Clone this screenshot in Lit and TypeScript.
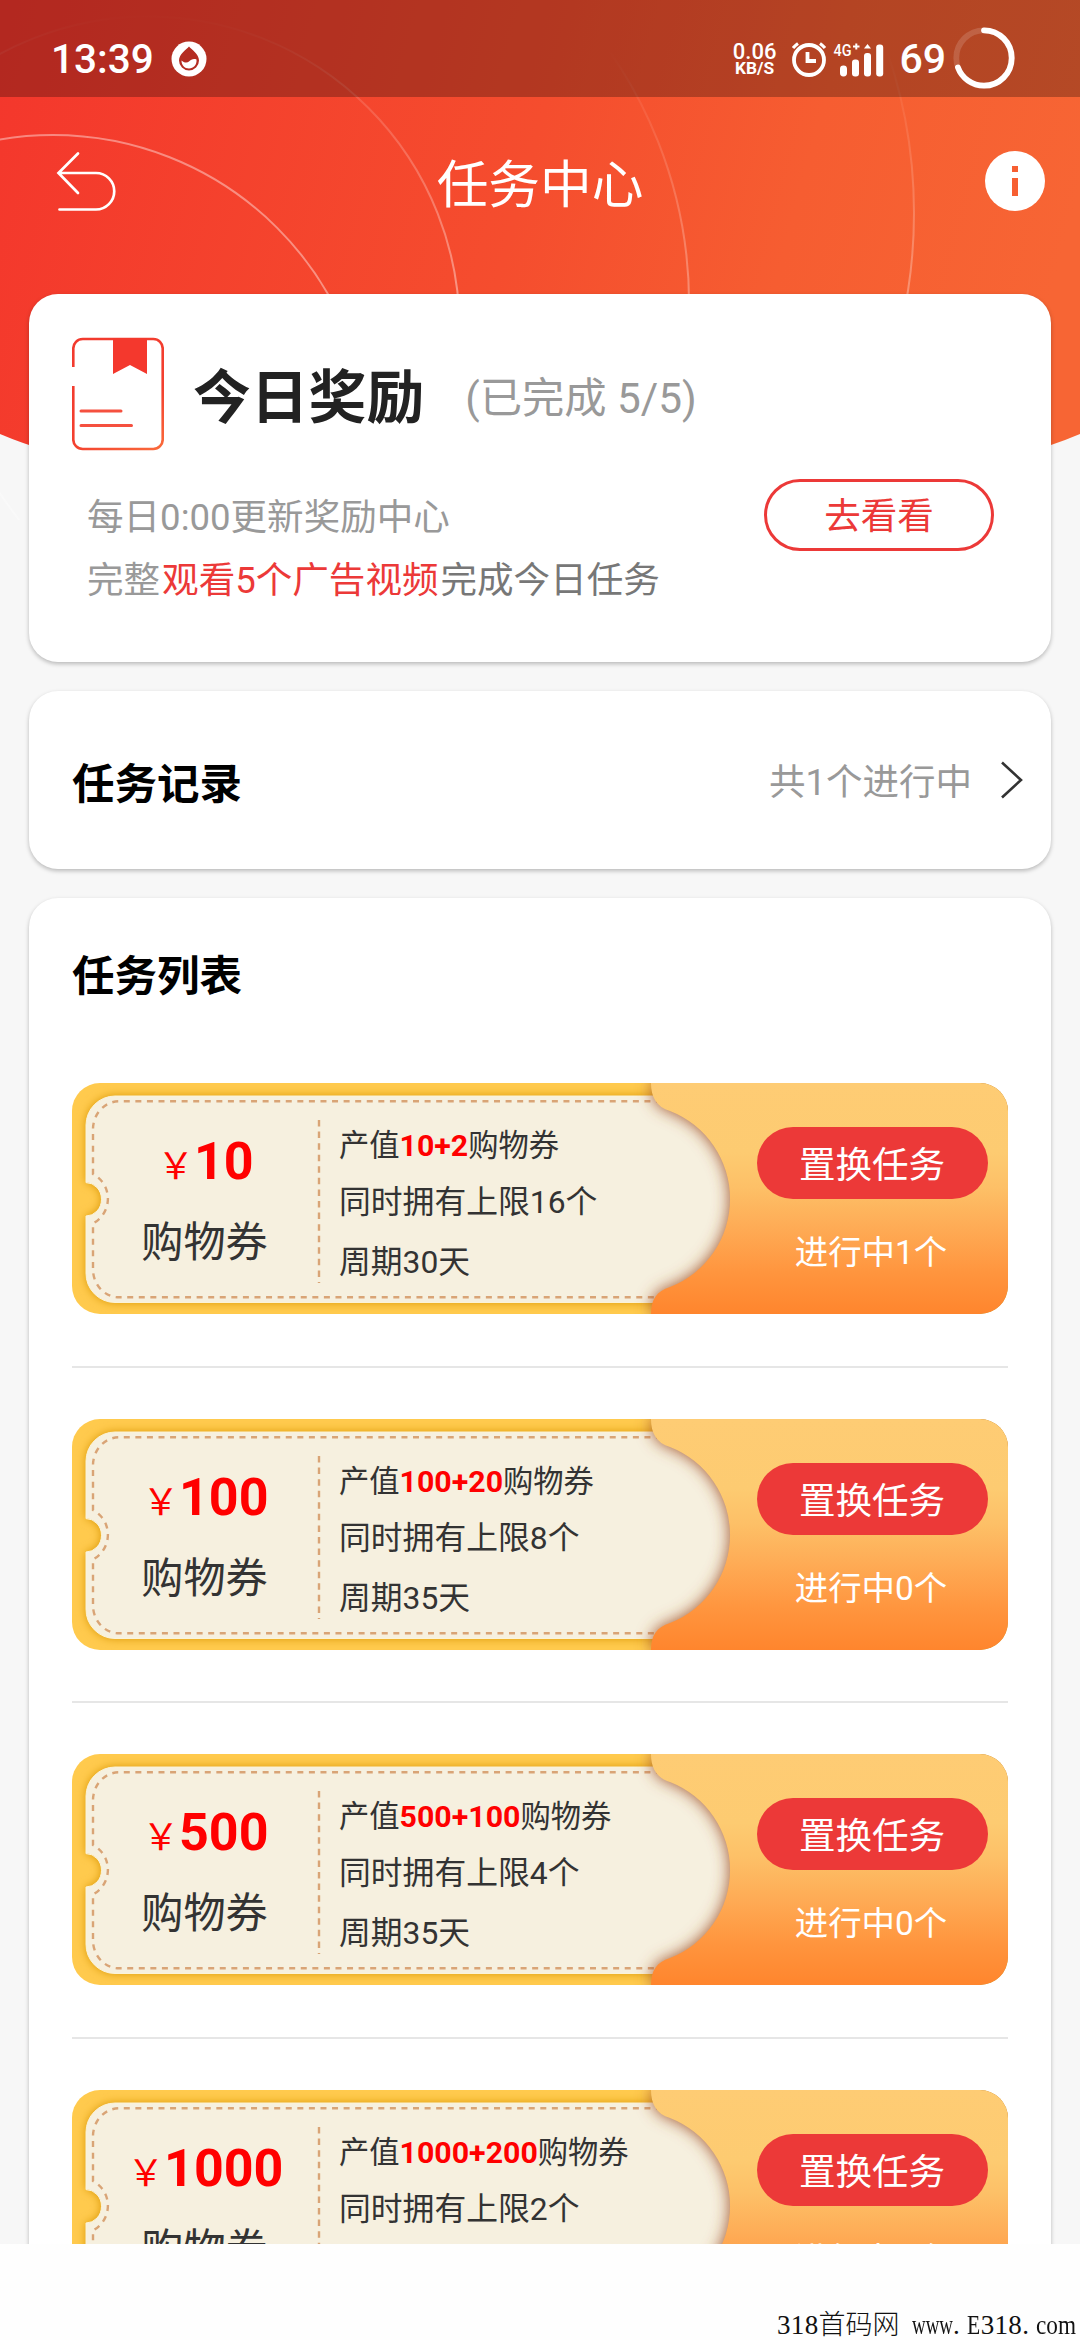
import { LitElement, html, css, svg } from "lit";
import { customElement, property } from "lit/decorators.js";

interface Task {
  price: string;
  yield: string;
  limit: number;
  days: number;
  active: number;
}

const TASKS: Task[] = [
  { price: "10", yield: "10+2", limit: 16, days: 30, active: 1 },
  { price: "100", yield: "100+20", limit: 8, days: 35, active: 0 },
  { price: "500", yield: "500+100", limit: 4, days: 35, active: 0 },
  { price: "1000", yield: "1000+200", limit: 2, days: 35, active: 0 },
];

const creamPath =
  "M43 13 H700 V219.5 H43 A29 29 0 0 1 14 190 V133 A15.5 16.7 0 0 0 14 99.6 V42 A29 29 0 0 1 43 13 Z";
const stitchPath =
  "M590 18.3 H47 A26 28 0 0 0 21 46 V91 A28 28 0 0 1 21 140.5 V186 A26 28 0 0 0 47 214.3 H590";
const stubPath =
  "M579 0 C579 14 584.5 24 598 28 A94.5 94.5 0 0 1 598 204 C584.5 208 579 217 579 231 H908 A28 28 0 0 0 936 203 V28 A28 28 0 0 0 908 0 Z";

@customElement("status-bar")
export class StatusBar extends LitElement {
  static styles = css`
    :host {
      display: block;
      height: 97px;
      background: rgba(0, 0, 0, 0.265);
      color: #fff;
      font-family: Roboto, sans-serif;
      font-weight: 500;
    }
    .row {
      height: 97px;
      box-sizing: border-box;
      padding: 0 65px 0 51px;
      display: flex;
      align-items: center;
    }
    .clock {
      font-size: 40.5px;
      line-height: 48px;
      width: 120px;
      margin-top: 20px;
    }
    .drop {
      width: 36px;
      height: 36px;
      margin-top: 21px;
    }
    .space {
      flex: 1;
    }
    .speed {
      display: flex;
      flex-direction: column;
      align-items: center;
      margin: 21px 15px 0 0;
    }
    .rate {
      font-size: 22px;
      line-height: 19px;
    }
    .unit {
      font-size: 17.3px;
      line-height: 15px;
      font-weight: 700;
    }
    .alarm {
      width: 36px;
      height: 38px;
      margin: 20px 6px 0 0;
    }
    .signal {
      width: 52px;
      height: 38px;
      margin-top: 21px;
    }
    .level {
      font-size: 41px;
      line-height: 48px;
      margin: 20px 7px 0 14px;
    }
    .ring {
      width: 62px;
      height: 62px;
      margin-top: 18px;
    }
  `;
  render() {
    return html`<div class="row">
      <span class="clock">13:39</span>
      <svg class="drop" viewBox="0 0 36 36">
        <circle cx="18" cy="18" r="17.5" fill="#fff" />
        <path
          d="M18 5.5 C20.5 8.5 28 13 28 19.5 A10 10 0 0 1 8 19.5 C8 13 15.5 8.5 18 5.5 Z"
          fill="#b42c22"
        />
        <path
          d="M10.500 19.500 C12.500 21.500 16 22.500 18 20.500 C20 18.500 22.500 17.500 25.500 18.500 C26 24 22.500 27.500 18 27.500 C13.500 27.500 10.500 24 10.500 19.500 Z"
          fill="#fff"
        />
      </svg>
      <span class="space"></span>
      <div class="speed">
        <span class="rate">0.06</span>
        <span class="unit">KB/S</span>
      </div>
      <svg class="alarm" viewBox="0 0 36 38" fill="none" stroke="#fff">
        <circle cx="18" cy="20" r="15" stroke-width="3.800" />
        <path d="M16.500 12 V21 H25" stroke-width="3.800" />
        <path d="M7 3.500 A24 24 0 0 0 2 8 M29 3.500 A24 24 0 0 1 34 8" stroke-width="3.200" />
      </svg>
      <svg class="signal" viewBox="0 0 52 38" fill="#fff">
        <text x="0.500" y="16" font-size="16.500" textLength="18" lengthAdjust="spacingAndGlyphs">4G</text>
        <path d="M20 6.500 H26.500 M23.300 3.500 V9.500" stroke="#fff" stroke-width="2" />
        <rect x="7" y="25.500" width="7" height="11" rx="3.400" />
        <rect x="19" y="19.500" width="7" height="17" rx="3" />
        <rect x="31" y="13" width="7" height="23.500" rx="3" />
        <path d="M34.500 4 L38 8.500 H31 Z" />
        <rect x="43.200" y="4.500" width="7" height="32" rx="3" />
      </svg>
      <span class="level">69</span>
      <svg class="ring" viewBox="0 0 62 62" fill="none" stroke="#fff" stroke-width="5.800">
        <circle cx="31" cy="31" r="27.700" stroke-opacity="0.150" />
        <circle
          cx="31"
          cy="31"
          r="27.700"
          pathLength="100"
          stroke-dasharray="69.500 100"
          stroke-linecap="round"
          transform="rotate(-90 31 31)"
        />
      </svg>
    </div>`;
  }
}

@customElement("task-ticket")
export class TaskTicket extends LitElement {
  @property({ attribute: false }) task!: Task;

  static styles = css`
    :host {
      display: block;
    }
    .ticket {
      position: relative;
      width: 936px;
      height: 231px;
      display: grid;
      grid-template-columns: 267px 399px 1fr;
      color: #333;
    }
    .art {
      position: absolute;
      inset: 0;
      width: 936px;
      height: 231px;
    }
    .col {
      position: relative;
      display: flex;
      flex-direction: column;
      white-space: nowrap;
    }
    .value {
      align-items: center;
      padding-top: 48px;
    }
    .price {
      color: #f00;
      font-size: 52px;
      line-height: 62px;
      font-weight: 700;
    }
    .yen {
      font-size: 36.56px;
      font-weight: 400;
      font-family: "Noto Sans CJK SC", sans-serif;
    }
    .kind {
      font-size: 42.2px;
      line-height: 60px;
      margin-top: 18px;
      padding-right: 2px;
    }
    .terms {
      padding-top: 43px;
      font-size: 31.8px;
    }
    .gain {
      font-size: 30.3px;
      line-height: 40px;
    }
    .gain b {
      color: #f00;
      font-weight: 700;
    }
    .limit {
      line-height: 40px;
      margin-top: 16px;
    }
    .cycle {
      line-height: 40px;
      margin-top: 20px;
    }
    .action {
      align-items: center;
      padding: 44px 4px 0 0;
      color: #fff;
    }
    .swap {
      width: 231px;
      height: 72px;
      border-radius: 36px;
      background: #ec3938;
      font-size: 36.56px;
      line-height: 77px;
      text-align: center;
      margin-left: 2px;
    }
    .active {
      font-size: 33.4px;
      line-height: 40px;
      margin-top: 34px;
    }
  `;

  render() {
    const t = this.task;
    return html`<div class="ticket">
      <svg class="art" viewBox="0 0 936 231">
        <defs>
          <linearGradient id="stub" x1="0" y1="0" x2="0" y2="1">
            <stop offset="0" stop-color="#fecc74" />
            <stop offset="0.300" stop-color="#fdcb71" />
            <stop offset="0.450" stop-color="#fdc067" />
            <stop offset="0.620" stop-color="#feac56" />
            <stop offset="0.820" stop-color="#ff953e" />
            <stop offset="1" stop-color="#ff852d" />
          </linearGradient>
          <filter id="soft" x="-10%" y="-20%" width="120%" height="140%">
            <feGaussianBlur stdDeviation="5" />
          </filter>
          <filter id="deep" x="-20%" y="-20%" width="140%" height="140%">
            <feGaussianBlur stdDeviation="8" />
          </filter>
          <clipPath id="edge"><rect width="936" height="231" rx="28" /></clipPath>
        </defs>
        <g clip-path="url(#edge)">
          <rect width="936" height="231" fill="#ffca4d" />
          <path d=${creamPath} fill="#d99410" filter="url(#soft)" />
          <path d=${creamPath} fill="#f6f0df" stroke="#fbf3d8" stroke-width="1" />
          <path
            d=${stitchPath}
            fill="none"
            stroke="#d9a476"
            stroke-width="2.400"
            stroke-dasharray="6 5.570"
          />
          <path
            d="M247 37 V200"
            stroke="#d9a476"
            stroke-width="2.400"
            stroke-dasharray="6.500 5.070"
          />
          <path d=${stubPath} fill="#a0522c" filter="url(#deep)" />
          <path d=${stubPath} fill="url(#stub)" />
        </g>
      </svg>
      <div class="col value">
        <div class="price"><span class="yen">￥</span>${t.price}</div>
        <div class="kind">购物券</div>
      </div>
      <div class="col terms">
        <div class="gain">产值<b>${t.yield}</b>购物券</div>
        <div class="limit">同时拥有上限${t.limit}个</div>
        <div class="cycle">周期${t.days}天</div>
      </div>
      <div class="col action">
        <div class="swap">置换任务</div>
        <div class="active">进行中${t.active}个</div>
      </div>
    </div>`;
  }
}

@customElement("app-root")
export class AppRoot extends LitElement {
  static styles = css`
    :host {
      display: block;
      width: 1080px;
      height: 2340px;
      overflow: hidden;
      background: #fefefe;
      font-family: Roboto, "Noto Sans CJK SC", sans-serif;
    }
    .view {
      position: relative;
      height: 2244px;
      overflow: hidden;
      background: #f7f7f7;
    }
    .backdrop {
      position: absolute;
      left: 0;
      top: 0;
      width: 1080px;
      height: 520px;
    }
    .content {
      position: relative;
    }
    .bar {
      height: 173px;
      display: grid;
      grid-template-columns: 120px 1fr 120px;
      align-items: center;
      color: #fff;
    }
    .back {
      width: 62px;
      height: 64px;
      margin: -5px 0 0 55px;
    }
    .title {
      text-align: center;
      font-size: 51.7px;
      line-height: 70px;
      padding-top: 4px;
    }
    .info {
      width: 60px;
      height: 60px;
      margin: -5px 0 0 25px;
    }
    .cards {
      padding: 24px 29px 0;
      display: flex;
      flex-direction: column;
      gap: 29px;
    }
    .card {
      background: #fff;
      border-radius: 29px;
      box-shadow: 0 2px 4px rgba(0, 0, 0, 0.25);
      box-sizing: border-box;
    }
    .reward {
      height: 368px;
      padding: 43px 57px 0 43px;
    }
    .top {
      display: flex;
      align-items: center;
      height: 114px;
    }
    .book {
      width: 92px;
      height: 114px;
    }
    .name {
      font-size: 57.8px;
      line-height: 80px;
      font-weight: 700;
      color: #222;
      margin: 8px 0 0 29px;
    }
    .done {
      font-size: 42.3px;
      line-height: 60px;
      color: #999;
      margin: 9px 0 0 41px;
    }
    .bottom {
      display: flex;
      justify-content: space-between;
      padding: 28px 0 0 15px;
    }
    .notes {
      font-size: 36.56px;
      line-height: 63px;
      color: #999;
      padding-top: 7px;
    }
    .hot {
      color: #ec3938;
      margin: 0 2px;
    }
    .dim {
      color: #777;
    }
    .go {
      width: 230px;
      height: 72px;
      box-sizing: border-box;
      border: 3px solid #ec3938;
      border-radius: 36px;
      color: #ec3938;
      font-size: 36.56px;
      line-height: 70px;
      text-align: center;
    }
    .record {
      height: 178px;
      padding: 0 27px 0 43px;
      display: flex;
      align-items: center;
    }
    .head {
      font-size: 42.5px;
      line-height: 60px;
      font-weight: 700;
      color: #000;
    }
    .record .head {
      flex: 1;
      padding-top: 9px;
    }
    .count {
      font-size: 36.5px;
      line-height: 50px;
      color: #999;
      padding-top: 6px;
    }
    .chevron {
      width: 24px;
      height: 40px;
      margin-left: 28px;
    }
    .list {
      padding: 49px 43px 0;
      height: 1500px;
    }
    .tickets {
      padding-top: 76px;
      display: flex;
      flex-direction: column;
    }
    .rule {
      height: 2px;
      background: #e6e6e6;
      margin: 51.67px 0 51px;
    }
    .footer {
      height: 96px;
      box-sizing: border-box;
      padding: 66px 0 0 777px;
      display: flex;
      font-family: "Liberation Serif", "Noto Sans CJK SC", serif;
      font-size: 27px;
      line-height: 30px;
      color: #111;
      white-space: nowrap;
    }
    .num {
      letter-spacing: 0.35px;
    }
    .cjk {
      font-weight: 300;
      margin-right: 12px;
    }
    .run {
      display: block;
      transform-origin: 0 50%;
    }
    .www {
      width: 41.5px;
      transform: scaleX(0.7);
    }
    .dot {
      width: 13.8px;
    }
    .cap {
      width: 13.8px;
      transform: scaleX(0.8);
    }
    .com {
      width: 40px;
      transform: scaleX(0.86);
    }
  `;

  private backdrop() {
    return svg`<svg class="backdrop" viewBox="0 0 1080 520">
      <defs>
        <linearGradient id="sky" gradientUnits="userSpaceOnUse" x1="0" y1="60" x2="1040" y2="340">
          <stop offset="0" stop-color="#f4372c" />
          <stop offset="0.500" stop-color="#f54d2e" />
          <stop offset="0.750" stop-color="#f65d31" />
          <stop offset="1" stop-color="#f76534" />
        </linearGradient>
        <linearGradient id="fade" gradientUnits="userSpaceOnUse" x1="0" y1="10" x2="0" y2="300">
          <stop offset="0" stop-color="#fff" stop-opacity="0" />
          <stop offset="1" stop-color="#fff" stop-opacity="0.420" />
        </linearGradient>
        <linearGradient id="faint" gradientUnits="userSpaceOnUse" x1="0" y1="50" x2="0" y2="300">
          <stop offset="0" stop-color="#fff" stop-opacity="0" />
          <stop offset="1" stop-color="#fff" stop-opacity="0.320" />
        </linearGradient>
      </defs>
      <path d="M0 0 H1080 V434 Q930 498 540 498 Q150 498 0 434 Z" fill="url(#sky)" />
      <g fill="none" stroke-width="2">
        <circle cx="53" cy="452" r="317" stroke="#fff" stroke-opacity="0.400" />
        <circle cx="148" cy="328" r="311.500" stroke="url(#fade)" />
        <circle cx="248.600" cy="304" r="440.500" stroke="url(#faint)" />
        <circle cx="414" cy="213" r="500" stroke="url(#faint)" />
      </g>
    </svg>`;
  }

  render() {
    return html`
      <div class="view">
        ${this.backdrop()}
        <div class="content">
          <status-bar></status-bar>
          <div class="bar">
            <svg class="back" viewBox="0 0 62 64" fill="none" stroke="#fff" stroke-width="2.700" stroke-linecap="round">
              <path d="M23 4.500 L3.500 24 L23 44 M4 24 H41 A18 18 0 0 1 41 60.500 H4.500" />
            </svg>
            <div class="title">任务中心</div>
            <svg class="info" viewBox="0 0 60 60">
              <circle cx="30" cy="30" r="30" fill="#fff" />
              <path d="M27 15 h6 v6 h-6 Z M27 27 h6 v18 h-6 Z" fill="#f75f32" />
            </svg>
          </div>
          <div class="cards">
            <div class="card reward">
              <div class="top">
                <svg class="book" viewBox="0 0 92 114" fill="none">
                  <defs>
                    <linearGradient id="ink" gradientUnits="userSpaceOnUse" x1="20" y1="0" x2="92" y2="112">
                      <stop offset="0" stop-color="#f23a2e" />
                      <stop offset="0.600" stop-color="#f3402f" />
                      <stop offset="1" stop-color="#fa6b3b" />
                    </linearGradient>
                  </defs>
                  <path
                    d="M1.300 30 V12 A9.500 9.500 0 0 1 11 2 H81 A9.500 9.500 0 0 1 90.700 12 V102 A9.500 9.500 0 0 1 81 112 H11 A9.500 9.500 0 0 1 1.300 102 V49"
                    stroke="url(#ink)"
                    stroke-width="2.600"
                  />
                  <path d="M41 1.500 H75 V37 L58 28 L41 37 Z" fill="#f4382d" />
                  <path d="M9 74 H49 M9 88.500 H59.500" stroke="#f5503f" stroke-width="3" stroke-linecap="round" />
                </svg>
                <div class="name">今日奖励</div>
                <div class="done">(已完成 5/5)</div>
              </div>
              <div class="bottom">
                <div class="notes">
                  <div>每日0:00更新奖励中心</div>
                  <div>完整<span class="hot">观看5个广告视频</span><span class="dim">完成今日任务</span></div>
                </div>
                <div class="go">去看看</div>
              </div>
            </div>
            <div class="card record">
              <div class="head">任务记录</div>
              <div class="count">共1个进行中</div>
              <svg class="chevron" viewBox="0 0 24 40" fill="none" stroke="#333" stroke-width="2.600">
                <path d="M2 2.500 L21 20 L2 37.500" />
              </svg>
            </div>
            <div class="card list">
              <div class="head">任务列表</div>
              <div class="tickets">
                ${TASKS.map(
                  (t, i) => html`${i ? html`<div class="rule"></div>` : ""}<task-ticket .task=${t}></task-ticket>`
                )}
              </div>
            </div>
          </div>
        </div>
      </div>
      <div class="footer">
        <span class="num">318</span><span class="cjk">首码网</span>
        <span class="run www">www</span><span class="run dot">.</span><span class="run cap">E</span
        ><span class="num">318</span><span class="run dot">.</span><span class="run com">com</span>
      </div>
    `;
  }
}
